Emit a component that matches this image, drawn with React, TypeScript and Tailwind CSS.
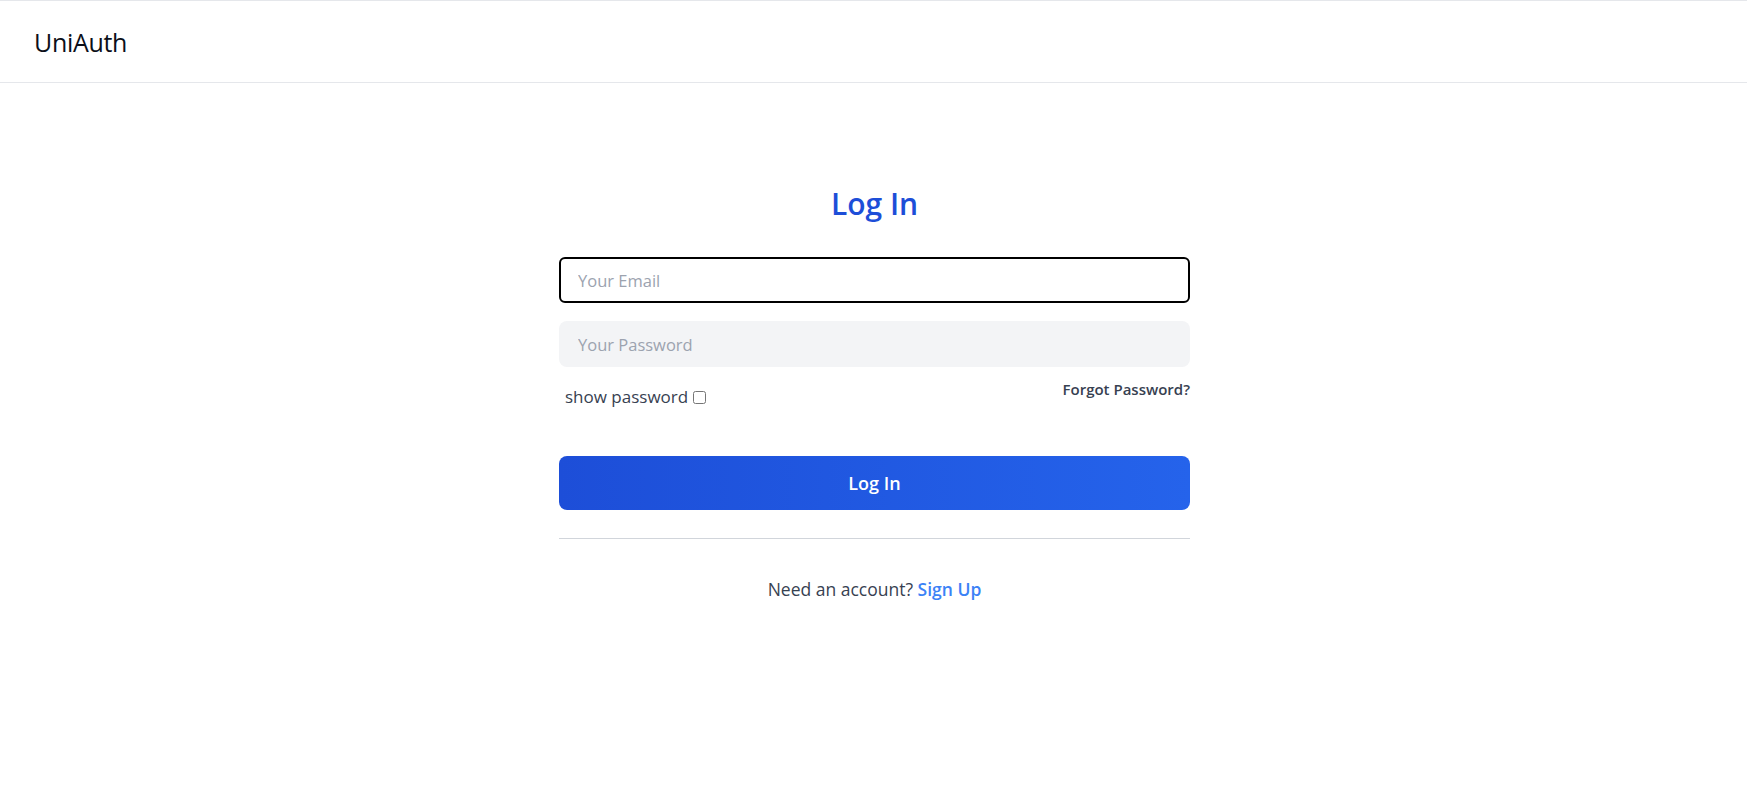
import React, { useState } from 'react';

const font = { fontFamily: '"Open Sans", "Noto Sans", sans-serif' };

const Header: React.FC = () => (
    <header className="h-[83px] border-t border-b border-[#e5e7eb] flex items-center px-[34px] pt-[3px] bg-white">
        <span className="text-[25px] text-[#0b0f19] tracking-[-0.3px]">UniAuth</span>
    </header>
);

const LoginForm: React.FC = () => {
    const [email, setEmail] = useState('');
    const [password, setPassword] = useState('');
    const [showPassword, setShowPassword] = useState(false);

    return (
        <div className="flex justify-center pl-[2px]">
            <div className="w-[631px] pt-[103px]">
                <h1 className="text-[30px] leading-[36px] font-semibold text-[#1d4ed8] text-center">Log In</h1>

                <form className="mt-[35px]" onSubmit={(e) => e.preventDefault()}>
                    <input
                        type="email"
                        value={email}
                        onChange={(e) => setEmail(e.target.value)}
                        placeholder="Your Email"
                        className="block w-full h-[46px] px-[17px] border-2 border-black rounded-md bg-white text-[16.5px] text-gray-900 placeholder:text-[#9ca3af] outline-none caret-blue-700"
                    />
                    <input
                        type={showPassword ? 'text' : 'password'}
                        value={password}
                        onChange={(e) => setPassword(e.target.value)}
                        placeholder="Your Password"
                        className="block w-full h-[46px] mt-[18px] px-[17px] border-2 border-transparent rounded-lg bg-[#f3f4f6] text-[16.5px] text-gray-900 placeholder:text-[#9ca3af] outline-none"
                    />

                    {/* Options row */}
                    <div className="flex items-start justify-between mt-3">
                        <label className="flex items-center pt-[6px] pl-[6px] text-[17px] leading-6 text-[#374151]">
                            show password
                            <input
                                type="checkbox"
                                checked={showPassword}
                                onChange={(e) => setShowPassword(e.target.checked)}
                                className="ml-[5px] w-[13px] h-[13px]"
                            />
                        </label>
                        <a href="#" className="text-[15px] leading-5 font-semibold text-[#374151]">
                            Forgot Password?
                        </a>
                    </div>

                    <button
                        type="submit"
                        className="w-full h-[54px] mt-[47px] rounded-lg bg-linear-to-r from-[#1d4ed8] to-[#2563eb] text-white text-lg font-semibold"
                    >
                        Log In
                    </button>
                </form>

                <div className="mt-[28px] border-t border-[#d1d5db]" />

                <p className="mt-[37px] text-center text-[17.5px] leading-[26px] text-[#374151]">
                    Need an account?{' '}
                    <a href="#" className="font-semibold text-[#3b82f6]">
                        Sign Up
                    </a>
                </p>
            </div>
        </div>
    );
};

export default function App() {
    return (
        <div className="min-h-screen bg-white" style={font}>
            <Header />
            <LoginForm />
        </div>
    );
}
